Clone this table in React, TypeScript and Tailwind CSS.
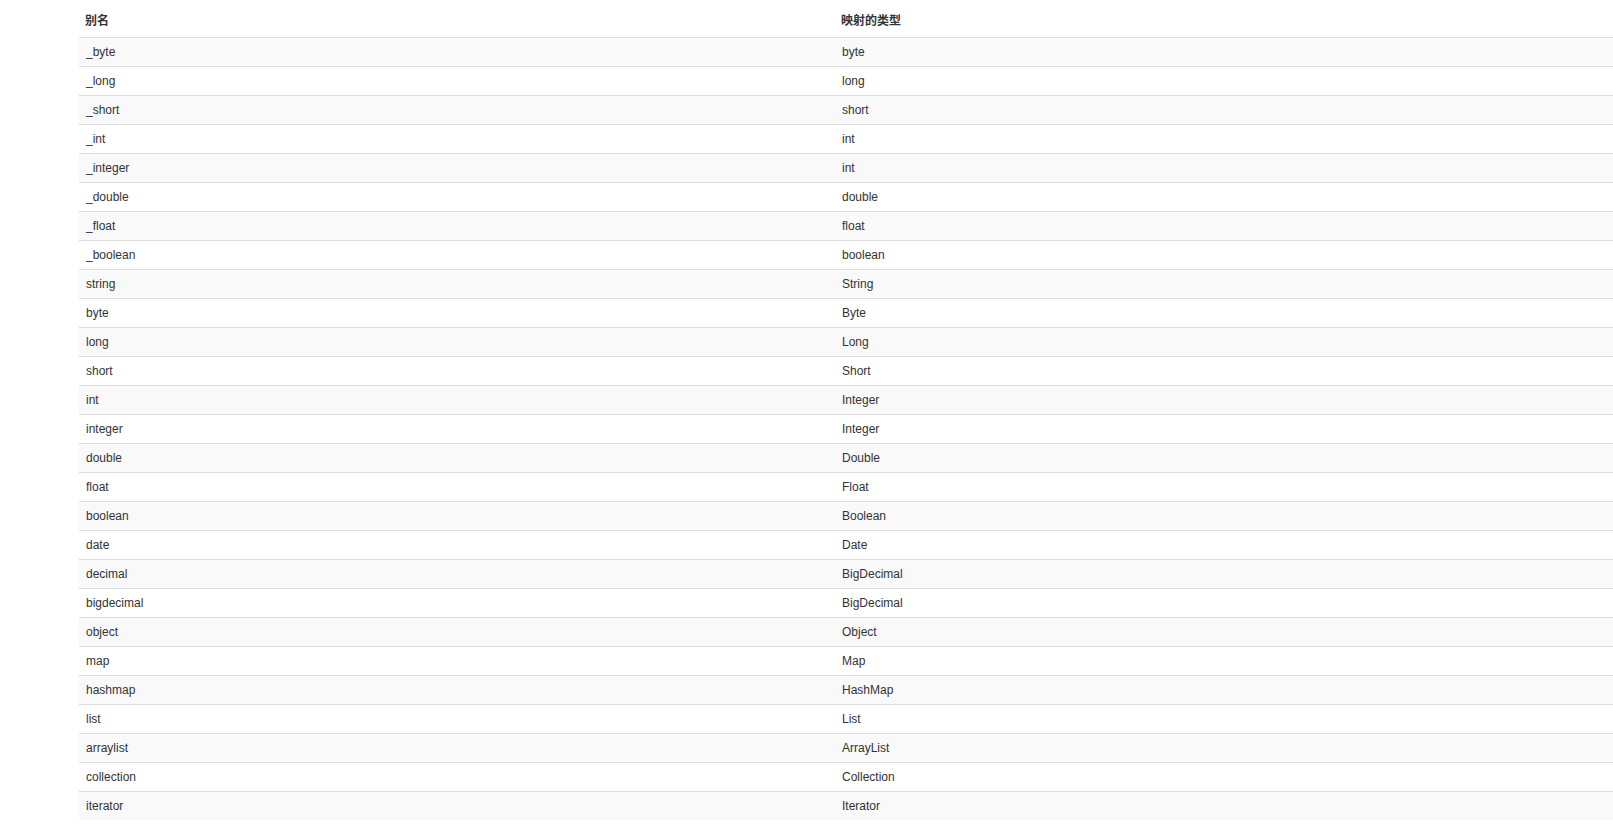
const rows: [string, string][] = [
  ["_byte", "byte"],
  ["_long", "long"],
  ["_short", "short"],
  ["_int", "int"],
  ["_integer", "int"],
  ["_double", "double"],
  ["_float", "float"],
  ["_boolean", "boolean"],
  ["string", "String"],
  ["byte", "Byte"],
  ["long", "Long"],
  ["short", "Short"],
  ["int", "Integer"],
  ["integer", "Integer"],
  ["double", "Double"],
  ["float", "Float"],
  ["boolean", "Boolean"],
  ["date", "Date"],
  ["decimal", "BigDecimal"],
  ["bigdecimal", "BigDecimal"],
  ["object", "Object"],
  ["map", "Map"],
  ["hashmap", "HashMap"],
  ["list", "List"],
  ["arraylist", "ArrayList"],
  ["collection", "Collection"],
  ["iterator", "Iterator"],
];

export default function App() {
  return (
    <div
      className="min-h-[833px] bg-white text-[12px] leading-[17px] text-[#333] overflow-hidden"
      style={{ fontFamily: '"Liberation Sans", Arial, "Noto Sans CJK SC", sans-serif' }}
    >
      <div className="ml-[79px] pt-[9px] w-[calc(100%-79px)]">
        <div className="grid grid-cols-[757px_1fr] h-[28px] items-end pb-[7px] font-bold">
          <div className="px-[6px]">别名</div>
          <div className="px-[5px]">映射的类型</div>
        </div>
        {rows.map(([a, b], i) => (
          <div
            key={i}
            className={`grid grid-cols-[757px_1fr] h-[29px] items-center border-t border-[#ddd] ${
              i % 2 === 0 ? "bg-[#f9f9f9]" : "bg-white"
            }`}
          >
            <div className="px-[7px]">{a}</div>
            <div className="px-[6px]">{b}</div>
          </div>
        ))}
      </div>
    </div>
  );
}
